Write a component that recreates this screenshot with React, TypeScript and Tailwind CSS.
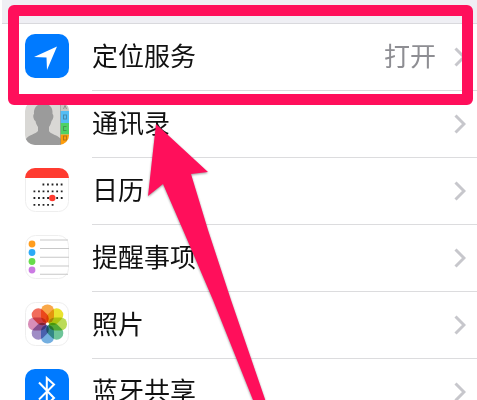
import React from 'react';

const LocationIcon: React.FC = () => (
  <svg viewBox="0 0 44 44" className="size-11 shrink-0" aria-hidden="true">
    <rect width="44" height="44" rx="10" fill="#007aff" />
    <path d="M32 12.5 L9 23 L21.5 23.5 L22 36 Z" fill="#fff" />
  </svg>
);

const ContactsIcon: React.FC = () => (
  <svg viewBox="0 0 44 44" className="size-11 shrink-0" aria-hidden="true">
    <defs>
      <clipPath id="contacts-shape">
        <rect width="44" height="44" rx="10" />
      </clipPath>
    </defs>
    <g clipPath="url(#contacts-shape)">
      <rect width="44" height="44" fill="#d9d8d5" />
      <path
        d="M18 3 C11.500 3 8.500 7 9 13 C7.500 14 8.500 19 10.500 20 C11 23 12 24 13 26 L13 30 C11 33 3 34 1 38 L1 44 L36 44 L36 38 C33 34 25 33 24 30 L24 26 C25.500 24 26 22 26.500 20 C28.500 18 29 14 27.500 13 C28 6 25 3 18 3 Z"
        fill="#9b9b9b"
      />
      <rect x="35.500" width="9" height="10" fill="#c9c7c3" />
      <rect x="35.500" y="10" width="9" height="12" fill="#54bdf4" />
      <rect x="35.500" y="22" width="9" height="11.500" fill="#4fd264" />
      <rect x="35.500" y="33.500" width="9" height="11" fill="#ff9d0a" />
      <path d="M35.500 0 V44" stroke="#777" strokeOpacity="0.5" strokeWidth="0.8" />
      <g fill="none" stroke="#333" strokeOpacity="0.4" strokeWidth="0.9">
        <path d="M38.500 8 L40 4.500 L41.500 8" />
        <rect x="38.500" y="14" width="3" height="4" />
        <path d="M41.500 25.500 H38.500 V29.500 H41.500" />
        <rect x="38.500" y="35" width="3" height="4" />
      </g>
    </g>
  </svg>
);

const CalendarIcon: React.FC = () => (
  <svg viewBox="0 0 44 44" className="size-11 shrink-0" aria-hidden="true">
    <rect x="0.500" y="0.500" width="43" height="43" rx="10" fill="#fff" stroke="#eeeeee" />
    <path d="M0 10 A10 10 0 0 1 10 0 H34 A10 10 0 0 1 44 10 Z" fill="#ff3b30" />
    <g fill="none" stroke="#222" strokeWidth="1.800" strokeDasharray="1.800 2.750">
      <path d="M17.500 16.500 H38" />
      <path d="M8.500 23.300 H38" />
      <path d="M8.500 30 H38" />
      <path d="M8.500 36.800 H29" />
    </g>
    <circle cx="27.300" cy="30" r="3.200" fill="#ff3b30" />
  </svg>
);

const RemindersIcon: React.FC = () => (
  <svg viewBox="0 0 44 44" className="size-11 shrink-0" aria-hidden="true">
    <rect x="0.500" y="0.500" width="43" height="43" rx="10" fill="#fff" stroke="#eeeeee" />
    <path
      d="M15 5 H43 M15 13.500 H44 M15 22.300 H44 M15 31 H44 M15 39.300 H43"
      stroke="#c8c8c8"
      strokeWidth="1.100"
    />
    <circle cx="7" cy="9" r="3.400" fill="#ff9d1e" />
    <circle cx="7" cy="17.500" r="3.400" fill="#2caaf7" />
    <circle cx="7" cy="26.500" r="3.400" fill="#67dc4b" />
    <circle cx="7" cy="35" r="3.400" fill="#cb7ae3" />
  </svg>
);

const petals = ['#f9a13a', '#e8e11c', '#b5d84a', '#62c090', '#68a8dd', '#9783c0', '#d584b2', '#f0604d'];

const PhotosIcon: React.FC = () => (
  <svg viewBox="0 0 44 44" className="size-11 shrink-0" aria-hidden="true">
    <rect x="0.500" y="0.500" width="43" height="43" rx="10" fill="#fff" stroke="#eeeeee" />
    {petals.map((color, i) => (
      <rect
        key={color}
        x="16"
        y="2.500"
        width="13"
        height="18.500"
        rx="6.200"
        fill={color}
        fillOpacity="0.92"
        transform={`rotate(${i * 45} 22.500 22)`}
        className="mix-blend-multiply"
      />
    ))}
    <circle cx="22.500" cy="22" r="1.400" fill="#fff" />
  </svg>
);

const BluetoothIcon: React.FC = () => (
  <svg viewBox="0 0 44 44" className="size-11 shrink-0" aria-hidden="true">
    <rect width="44" height="44" rx="10" fill="#007aff" />
    <path d="M14 13.500 L29 29 L21.800 35.500 V9 L29 15.500 L14 30.500" fill="none" stroke="#fff" strokeWidth="2" />
  </svg>
);

const Chevron: React.FC = () => (
  <svg viewBox="0 0 12 20" className="h-5 w-3 shrink-0" aria-hidden="true">
    <path d="M1.500 1.500 L10 10 L1.500 18.500" fill="none" stroke="#c7c7cc" strokeWidth="3" />
  </svg>
);

const rows = [
  { label: '定位服务', value: '打开', icon: <LocationIcon /> },
  { label: '通讯录', icon: <ContactsIcon /> },
  { label: '日历', icon: <CalendarIcon /> },
  { label: '提醒事项', icon: <RemindersIcon /> },
  { label: '照片', icon: <PhotosIcon /> },
  { label: '蓝牙共享', icon: <BluetoothIcon /> },
];

const App: React.FC = () => {
  return (
    <main className="relative h-screen overflow-hidden bg-white font-['Liberation_Sans','Noto_Sans_CJK_SC',sans-serif]">
      <div className="ml-0.5 h-6 border-b border-[#d9d9dd] bg-[#efeff4]" />

      <ul>
        {rows.map((row) => (
          <li key={row.label}>
            <button type="button" className="flex w-full items-start gap-[23px] pl-[25px] text-left">
              <span className="pt-2.5">{row.icon}</span>
              <span className="flex h-[67px] flex-1 items-center border-b border-[#dcdcde] pr-[11px]">
                <span className="flex-1 text-[26px] leading-8 text-[#111]">{row.label}</span>
                {row.value && <span className="mr-[18px] text-[26px] leading-8 text-[#8e8e93]">{row.value}</span>}
                <Chevron />
              </span>
            </button>
          </li>
        ))}
      </ul>

      {/* highlight frame and pointer */}
      <div className="pointer-events-none absolute top-[5px] right-1 left-2 h-[100px] rounded-md border-[11px] border-[#ff0f5b]" />
      <svg
        viewBox="0 0 477 400"
        className="pointer-events-none absolute top-0 left-0 h-[400px] w-[477px] drop-shadow-[0_1px_1px_rgba(0,0,0,0.4)]"
        aria-hidden="true"
      >
        <path d="M156 124 L208 172 L191 174 L208 230 L231 300 L267 405 L255 405 L213 300 L183 230 L163 184 L148 196 Z" fill="#ff0f5b" />
      </svg>
    </main>
  );
};

export default App;
